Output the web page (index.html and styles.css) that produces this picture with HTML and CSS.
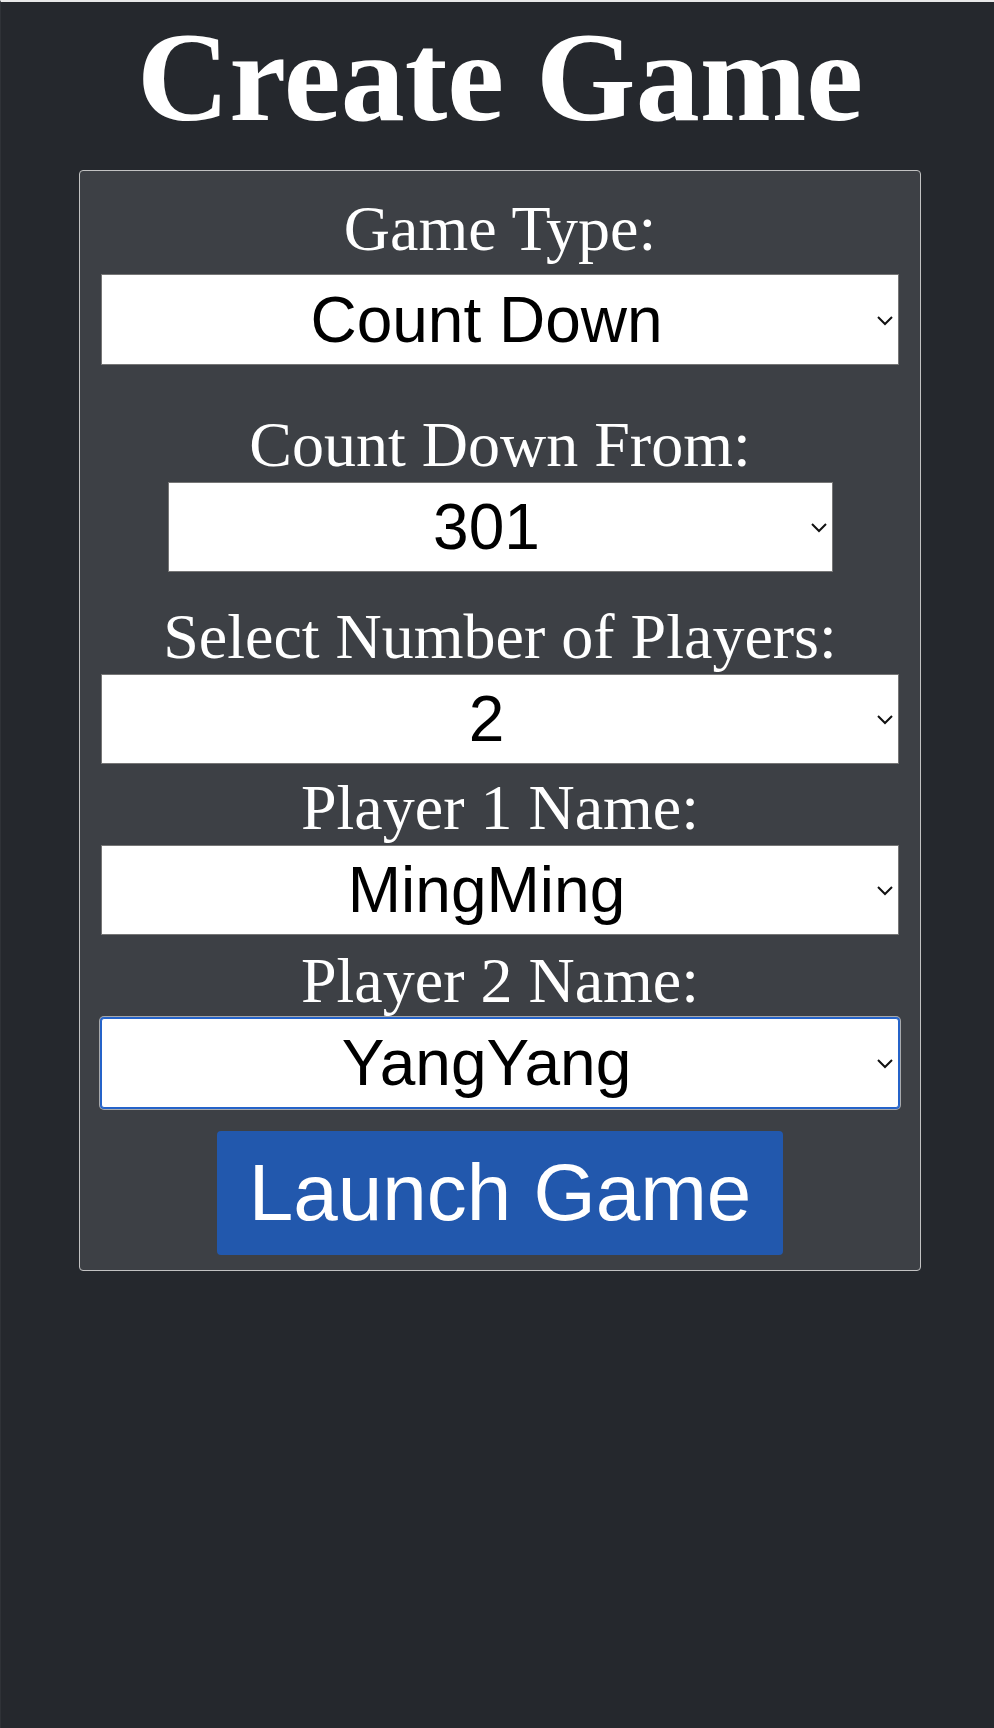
FILE: index.html
```html
<!DOCTYPE html>
<html lang="en">
<head>
<meta charset="utf-8">
<title>Create Game</title>
<link rel="stylesheet" href="styles.css">
</head>
<body>
<div class="page">
  <h1 class="title">Create Game</h1>
  <form class="card">
    <label class="label label-first" for="gameType">Game Type:</label>
    <div class="field field-first">
      <select id="gameType" class="select">
        <option selected>Count Down</option>
        <option>Cricket</option>
      </select>
      <svg class="chevron" width="18" height="11" viewBox="0 0 18 11"><path d="M2 2 L9 9 L16 2" fill="none" stroke="#111" stroke-width="2"/></svg>
    </div>

    <label class="label label-second" for="countFrom">Count Down From:</label>
    <div class="field field-narrow">
      <select id="countFrom" class="select">
        <option selected>301</option>
        <option>501</option>
        <option>701</option>
      </select>
      <svg class="chevron" width="18" height="11" viewBox="0 0 18 11"><path d="M2 2 L9 9 L16 2" fill="none" stroke="#111" stroke-width="2"/></svg>
    </div>

    <label class="label label-third" for="players">Select Number of Players:</label>
    <div class="field">
      <select id="players" class="select">
        <option>1</option>
        <option selected>2</option>
        <option>3</option>
        <option>4</option>
      </select>
      <svg class="chevron" width="18" height="11" viewBox="0 0 18 11"><path d="M2 2 L9 9 L16 2" fill="none" stroke="#111" stroke-width="2"/></svg>
    </div>

    <label class="label label-player" for="p1">Player 1 Name:</label>
    <div class="field">
      <select id="p1" class="select">
        <option selected>MingMing</option>
        <option>YangYang</option>
      </select>
      <svg class="chevron" width="18" height="11" viewBox="0 0 18 11"><path d="M2 2 L9 9 L16 2" fill="none" stroke="#111" stroke-width="2"/></svg>
    </div>

    <label class="label label-player2" for="p2">Player 2 Name:</label>
    <div class="field">
      <select id="p2" class="select select-focused">
        <option>MingMing</option>
        <option selected>YangYang</option>
      </select>
      <svg class="chevron" width="18" height="11" viewBox="0 0 18 11"><path d="M2 2 L9 9 L16 2" fill="none" stroke="#111" stroke-width="2"/></svg>
    </div>

    <button type="button" class="launch">Launch Game</button>
  </form>
</div>
</body>
</html>
```

FILE: styles.css
```css
html {
  background: #25282d;
}
body {
  margin: 0;
  min-height: 100vh;
  box-sizing: border-box;
  background: #25282d;
  border-top: 2px solid #e8e8e8;
  border-left: 1px solid #2f3237;
}
.page {
  padding-left: 5px;
}
.title {
  margin: 4px 0 22px;
  font-family: "Liberation Serif", "Times New Roman", serif;
  font-weight: bold;
  font-size: 128px;
  line-height: 142px;
  color: #fff;
  text-align: center;
}
.card {
  box-sizing: border-box;
  width: 842px;
  margin: 0 auto;
  padding: 21px 21px 15px;
  background: #3d4045;
  border: 1px solid #c2c2c2;
  border-radius: 4px;
}
.label {
  display: block;
  font-family: "Liberation Serif", "Times New Roman", serif;
  font-size: 64px;
  line-height: normal;
  color: #fff;
  text-align: center;
}
.label-first { margin-bottom: 8px; }
.label-second { margin-top: 43px; }
.label-third { margin-top: 28px; }
.label-player { margin-top: 7px; }
.label-player2 { margin-top: 9px; }
.field {
  position: relative;
}
.field-narrow {
  width: 665px;
  margin: 0 auto;
}
.select {
  display: block;
  box-sizing: border-box;
  width: 100%;
  height: 90px;
  margin: 0;
  padding: 0 31px 0 4px;
  -webkit-appearance: none;
  appearance: none;
  background: #fff;
  color: #000;
  border: 1px solid #767676;
  border-radius: 0;
  font-family: "Liberation Sans", Arial, sans-serif;
  font-size: 64px;
  text-align: center;
  text-align-last: center;
  outline: none;
}
.field-first .select {
  height: 91px;
}
.select-focused {
  border: 1px solid #2563c9;
  border-radius: 3px;
  box-shadow: 0 0 0 1px #2563c9, 0 0 0 2px rgba(255, 255, 255, 0.55);
}
.chevron {
  position: absolute;
  right: 5px;
  top: 50%;
  margin-top: -5px;
  pointer-events: none;
}
.launch {
  display: block;
  margin: 23px auto 0;
  padding: 16px 32px;
  background: #2258ad;
  color: #fff;
  border: none;
  border-radius: 4px;
  font-family: "Liberation Sans", Arial, sans-serif;
  font-size: 80px;
  line-height: normal;
}
```
